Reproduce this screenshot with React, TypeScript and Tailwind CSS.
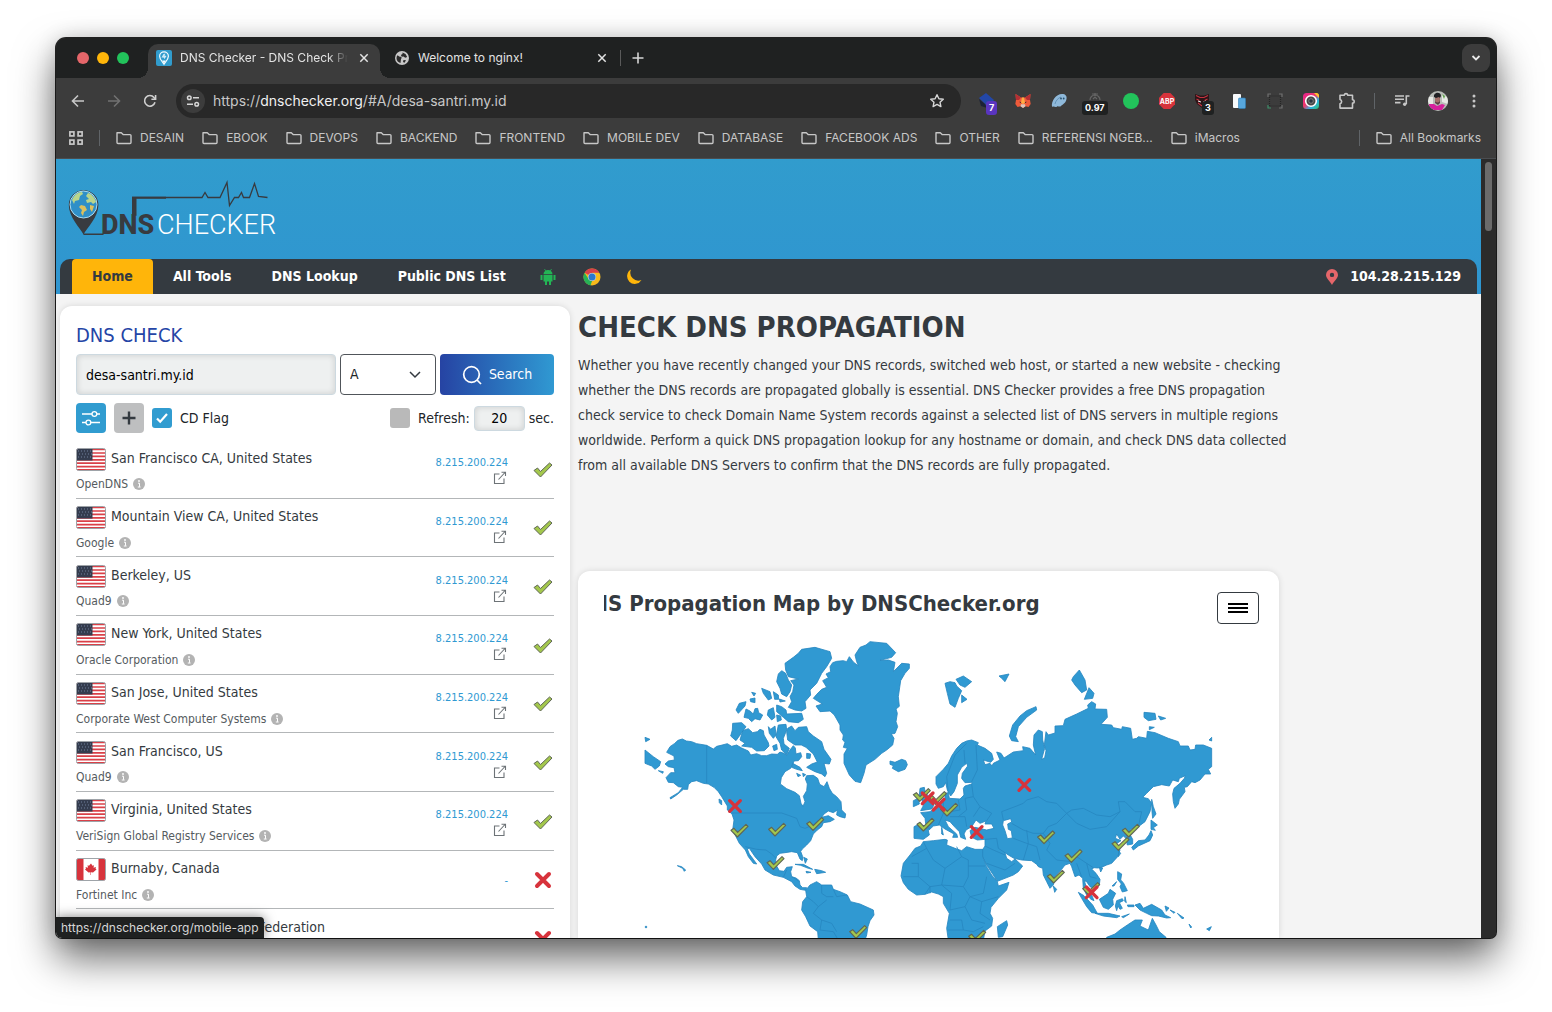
import React from "react";

const UI = "font-[Inter,'Liberation_Sans',sans-serif]";
const SITE = "font-['DejaVu_Sans_Condensed','Noto_Sans',sans-serif]";

/* ---------- browser chrome icons ---------- */

function FolderIcon() {
  return (
    <svg className="h-4 w-4 shrink-0" viewBox="0 0 16 16" fill="none" stroke="#c7c7c7" strokeWidth="1.4">
      <path d="M1 2.800h4.300l1.800 1.800h6.900a1 1 0 0 1 1 1v6.900a1 1 0 0 1-1 1H2a1 1 0 0 1-1-1z" strokeLinejoin="round" />
    </svg>
  );
}

function CloseIcon() {
  return (
    <svg className="h-4 w-4" viewBox="0 0 16 16" stroke="#e3e3e3" strokeWidth="1.5">
      <path d="M4.3 4.3l7.4 7.4M11.7 4.3l-7.4 7.4" />
    </svg>
  );
}

function SiteFavicon() {
  return (
    <svg className="h-4 w-4 shrink-0" viewBox="0 0 16 16">
      <rect width="16" height="16" rx="2" fill="#319ccd" />
      <path d="M8 14.3C6.600 12 3.600 9.500 3.600 6.300a4.400 4.400 0 0 1 8.800 0C12.400 9.500 9.400 12 8 14.300z" fill="#319ccd" stroke="#f4fbff" strokeWidth="1.200" />
      <path d="M5.500 7.500l2-3.500 2-.5-1 2 2 .5-2 3-1-1.500z" fill="#cfeaf7" />
      <path d="M6.300 10.500h3.400L8 13.800z" fill="#f4fbff" />
    </svg>
  );
}

function GlobeIcon() {
  return (
    <svg className="h-4 w-4 shrink-0" viewBox="0 0 16 16">
      <circle cx="8" cy="8" r="7" fill="#c7c7c7" />
      <path d="M3 5.500c1.500-.5 2 1.300 3.700 1.300 1.300 0 1 1.700.3 2.200L6.500 13C4 12.500 2.500 10.500 2.500 8zM8.500 2.500l3 1.500 1.700 3-2 .8-1.700-1.300-1.700.3-1-1.800 1.700-1zM9.500 10l2.500.3-1.500 2.400-1.500-.7z" fill="#2a2a2a" />
    </svg>
  );
}

function BackIcon() {
  return (
    <svg className="h-4 w-4" viewBox="0 0 16 16" fill="none" stroke="#c7c7c7" strokeWidth="1.600">
      <path d="M14 8H2.800M8 2.500L2.500 8 8 13.500" />
    </svg>
  );
}

function ForwardIcon() {
  return (
    <svg className="h-4 w-4" viewBox="0 0 16 16" fill="none" stroke="#717171" strokeWidth="1.600">
      <path d="M2 8h11.200M8 2.500L13.500 8 8 13.500" />
    </svg>
  );
}

function ReloadIcon() {
  return (
    <svg className="h-4 w-4" viewBox="0 0 16 16" fill="none" stroke="#d0d0d0" strokeWidth="1.600">
      <path d="M13 9.300A5.300 5.300 0 1 1 12 4.500L13.500 6" />
      <path d="M13.600 2v4.200H9.400" />
    </svg>
  );
}

function TuneIcon() {
  return (
    <svg className="h-4 w-4" viewBox="0 0 16 16" fill="none" stroke="#d6d6d6" strokeWidth="1.500">
      <circle cx="4.300" cy="4.800" r="1.800" />
      <path d="M8 4.800h6M2 11.200h6" />
      <circle cx="11.700" cy="11.200" r="1.800" />
    </svg>
  );
}

function StarIcon() {
  return (
    <svg className="h-4 w-4" viewBox="0 0 16 16" fill="none" stroke="#d6d6d6" strokeWidth="1.400" strokeLinejoin="round">
      <path d="M8 1.700l1.900 4 4.400.5-3.300 3 .9 4.400L8 11.400l-3.900 2.200.9-4.400-3.300-3 4.400-.5z" />
    </svg>
  );
}

function AppsIcon() {
  return (
    <svg className="h-4 w-4" viewBox="0 0 16 16" fill="none" stroke="#c7c7c7" strokeWidth="1.700">
      <rect x="1.900" y="1.900" width="4" height="4" />
      <rect x="10.100" y="1.900" width="4" height="4" />
      <rect x="1.900" y="10.100" width="4" height="4" />
      <rect x="10.100" y="10.100" width="4" height="4" />
    </svg>
  );
}

/* ---------- extension icons ---------- */

function Badge({ text, tone }: { text: string; tone: string }) {
  return (
    <span className={`absolute top-[8px] rounded-[3px] px-[3px] text-[9px] leading-[14px] font-bold text-white ${tone}`}>
      {text}
    </span>
  );
}

const extensions: { name: string; icon: React.ReactNode; badge?: React.ReactNode }[] = [
  {
    name: "Tag assistant",
    icon: (
      <svg className="h-4 w-4" viewBox="0 0 16 16">
        <path d="M0 5L7 0l8 7-6 7z" fill="#2347a8" />
        <path d="M0 6l2 7 6 2-2-4z" fill="#1b2236" />
      </svg>
    ),
    badge: <Badge text="7" tone="left-[7px] bg-[#5a35c0]" />,
  },
  {
    name: "Wallet",
    icon: (
      <svg className="h-4 w-4" viewBox="0 0 16 16">
        <path d="M0.500 1l5.500 3.500h4L15.500 1l-.5 6 .7 4-2.200 3-3-.7L8 15l-2.500-1.700-3 .7L.3 11 1 7z" fill="#ee5a3a" />
        <path d="M.5 1L6 4.500 4 7 1 7zM15.500 1L10 4.500 12 7l3 0z" fill="#b52f34" />
        <path d="M5.500 13.300L8 15l2.500-1.700-.5-2H6z" fill="#d9c7bd" />
        <path d="M4.500 8.500l2 1-1.500.5zM11.500 8.500l-2 1 1.500.5z" fill="#2a2a2a" />
        <path d="M7 4.500h2l1 5-2 1.800-2-1.800z" fill="#ffad42" />
      </svg>
    ),
  },
  {
    name: "Ghost",
    icon: (
      <svg className="h-4 w-4" viewBox="0 0 16 16">
        <path d="M1 14C0 8 5 1 11 1c3.500 0 5 2 4.500 5-.5 4-3.500 5-5.500 7-1.500 1.500-3-.5-4 .5C4.500 15 3 12.500 1 14z" fill="#8fb9da" />
        <path d="M4 11c.5-3 3-6 6-7" stroke="#6593b8" strokeWidth="1" fill="none" />
        <circle cx="10" cy="5.500" r=".9" fill="#27516e" />
        <circle cx="12.700" cy="5.500" r=".9" fill="#27516e" />
      </svg>
    ),
  },
  {
    name: "Speed",
    icon: (
      <svg className="h-4 w-4" viewBox="0 0 16 16" fill="none" stroke="#656565" strokeWidth="1.200">
        <path d="M5 1h6M8 0v3M3 7a5 5 0 0 1 10 0M6 6l2-2 2 2" />
      </svg>
    ),
    badge: <Badge text="0.97" tone="-left-[5px] bg-[#1f2121]" />,
  },
  { name: "Recorder", icon: <span className="h-4 w-4 rounded-full bg-[#22c35b]" /> },
  {
    name: "Ad blocker",
    icon: (
      <svg className="h-4 w-4" viewBox="0 0 16 16">
        <path d="M4.700 0h6.600L16 4.700v6.600L11.300 16H4.700L0 11.300V4.700z" fill="#d7333c" />
        <text x="8" y="10.500" textAnchor="middle" fontSize="7" fontWeight="700" fontFamily="Inter" fill="#fff">ABP</text>
      </svg>
    ),
  },
  {
    name: "Shield",
    icon: (
      <svg className="h-4 w-4" viewBox="0 0 16 16">
        <path d="M0 1l5 1.500h4L14 1v6l-2 4-5 4-5-4-2-4z" fill="#2b1417" />
        <path d="M1 2.500l4 2h4l4-2M1.500 6l3 1.500M12.500 6l-3 1.500M3 10l4 3" stroke="#c23340" strokeWidth="1.200" fill="none" />
        <path d="M3 8l3 1M11 8L8 9" stroke="#eee" strokeWidth="1" />
      </svg>
    ),
    badge: <Badge text="3" tone="left-[7px] bg-[#1f2121]" />,
  },
  {
    name: "Devices",
    icon: (
      <svg className="h-4 w-4" viewBox="0 0 16 16">
        <rect x="2" y="1" width="8" height="14" rx="1" fill="#f8fafc" />
        <rect x="7.500" y="5" width="7" height="10.500" rx="1" fill="#57a7dd" stroke="#2f7fb8" strokeWidth=".6" />
      </svg>
    ),
  },
  {
    name: "Capture",
    icon: (
      <svg className="h-4 w-4" viewBox="0 0 16 16" fill="none" strokeWidth="1.200">
        <path d="M1 4V1h3M12 1h3v3M15 12v3h-3" stroke="#6f6f6f" />
        <path d="M4 15H1v-3" stroke="#3e8f6a" />
        <rect x="2.500" y="3" width="11" height="10" stroke="#252525" strokeDasharray="1 1" />
      </svg>
    ),
  },
  {
    name: "Camera",
    icon: (
      <svg className="h-4 w-4" viewBox="0 0 16 16">
        <defs>
          <linearGradient id="cam" x1="0" y1="0" x2="1" y2="1">
            <stop offset="0" stopColor="#e5218f" />
            <stop offset=".45" stopColor="#f0386b" />
            <stop offset=".7" stopColor="#2ab4e6" />
            <stop offset="1" stopColor="#35c269" />
          </linearGradient>
        </defs>
        <rect width="16" height="16" rx="3.500" fill="url(#cam)" />
        <path d="M11 0h2.500A2.500 2.500 0 0 1 16 2.500V5z" fill="#ffc02e" />
        <circle cx="8" cy="8" r="5.300" fill="#474747" stroke="#fff" strokeWidth="1.600" />
        <circle cx="8" cy="8" r="2.300" fill="#2a3540" stroke="#8a8a8a" strokeWidth=".8" />
      </svg>
    ),
  },
  {
    name: "Extensions",
    icon: (
      <svg className="h-[18px] w-[18px] shrink-0" viewBox="0 0 18 18" fill="none" stroke="#c7c7c7" strokeWidth="1.600" strokeLinejoin="round">
        <path d="M2 3.300h4.300a1.700 1.700 0 0 1 3.400 0H14.500v4.400a1.700 1.700 0 0 1 0 3.400v5H2v-4.300a2.300 2.300 0 0 0 0-4.400z" />
      </svg>
    ),
  },
];

const bookmarks = [
  "DESAIN",
  "EBOOK",
  "DEVOPS",
  "BACKEND",
  "FRONTEND",
  "MOBILE DEV",
  "DATABASE",
  "FACEBOOK ADS",
  "OTHER",
  "REFERENSI NGEB...",
  "iMacros",
];

function TabStrip() {
  return (
    <div className="flex h-10 items-end bg-[#1f2121] pr-1 text-[12px] text-[#e3e3e3]">
      <div className="flex h-10 items-center gap-2 pr-[19px] pl-[21px]">
        <span className="h-3 w-3 rounded-full bg-[#e5666a]" />
        <span className="h-3 w-3 rounded-full bg-[#ffb60a]" />
        <span className="h-3 w-3 rounded-full bg-[#22c35b]" />
      </div>
      <div className="relative flex h-[34px] w-[232px] items-center gap-2 rounded-t-[10px] bg-[#3c3c3c] pr-2 pb-[6px] pl-2">
        <span className="absolute bottom-0 -left-[10px] h-[10px] w-[10px] bg-[radial-gradient(circle_at_0_0,#1f2121_10px,#3c3c3c_10px)]" />
        <span className="absolute -right-[10px] bottom-0 h-[10px] w-[10px] bg-[radial-gradient(circle_at_100%_0,#1f2121_10px,#3c3c3c_10px)]" />
        <SiteFavicon />
        <span className="min-w-0 flex-1 overflow-hidden whitespace-nowrap [mask-image:linear-gradient(to_right,black_148px,transparent_168px)]">
          DNS Checker - DNS Check Propagation
        </span>
        <button aria-label="Close tab"><CloseIcon /></button>
      </div>
      <div className="flex h-[34px] w-[240px] items-center gap-2 pr-[10px] pb-[6px] pl-[14px]">
        <GlobeIcon />
        <span className="flex-1">Welcome to nginx!</span>
        <button aria-label="Close tab"><CloseIcon /></button>
      </div>
      <div className="flex h-[34px] items-center gap-[9px] pb-[6px]">
        <span className="h-4 w-px bg-[#5a5a5a]" />
        <button aria-label="New tab">
          <svg className="h-4 w-4" viewBox="0 0 16 16" stroke="#d6d6d6" strokeWidth="1.600"><path d="M8 2.500v11M2.500 8h11" /></svg>
        </button>
      </div>
      <button aria-label="Search tabs" className="mr-[2px] mb-[6px] ml-auto flex h-7 w-7 items-center justify-center rounded-[9px] bg-[#3c3c3c]">
        <svg className="h-3 w-3" viewBox="0 0 12 12" fill="none" stroke="#e8e8e8" strokeWidth="1.800"><path d="M2.500 4l3.500 3.500L9.500 4" /></svg>
      </button>
    </div>
  );
}

function Toolbar() {
  return (
    <div className="flex h-[46px] items-center bg-[#3c3c3c] pr-[14px] pl-[14px]">
      <div className="flex gap-5 pr-[18px]">
        <button aria-label="Back"><BackIcon /></button>
        <button aria-label="Forward"><ForwardIcon /></button>
        <button aria-label="Reload"><ReloadIcon /></button>
      </div>
      <div className="flex h-[34px] min-w-0 flex-1 items-center gap-2 rounded-full bg-[#282828] pr-4 pl-[5px]">
        <button aria-label="Site information" className="flex h-6 w-6 items-center justify-center rounded-full bg-[#3c3c3c]"><TuneIcon /></button>
        <span className="min-w-0 flex-1 text-[14px] leading-[18px] text-[#c7c7c7]">
          https://<span className="text-[#f0f0f0]">dnschecker.org</span>/#A/desa-santri.my.id
        </span>
        <button aria-label="Bookmark this page"><StarIcon /></button>
      </div>
      <div className="flex items-center gap-5 pl-[18px]">
        {extensions.map((e) => (
          <button key={e.name} aria-label={e.name} className="relative flex h-4 w-4 items-center justify-center">
            {e.icon}
            {e.badge}
          </button>
        ))}
      </div>
      <span className="mx-[19px] h-4 w-px bg-[#606468]" />
      <div className="flex items-center gap-[18px]">
        <button aria-label="Media controls">
          <svg className="h-4 w-4" viewBox="0 0 16 16" fill="none" stroke="#c7c7c7" strokeWidth="1.600">
            <path d="M1 3h9M1 6.300h9M1 9.600h5.500M12.300 11V3H15.500" />
            <circle cx="10.700" cy="11.300" r="1.700" fill="#c7c7c7" stroke="none" />
          </svg>
        </button>
        <button aria-label="Profile">
          <svg className="h-5 w-5 rounded-full" viewBox="0 0 20 20">
            <rect width="20" height="20" fill="#b9bcb8" />
            <path d="M0 6h5v9H0zM14 3l6 4v6l-6-2z" fill="#e7e9e5" />
            <path d="M14 3l3 2-1 3z" fill="#5ea04c" />
            <path d="M1 13l5 0 3 2 5-2 3 1-3 5H6l-5-2z" fill="#d5219c" />
            <path d="M8 3h4v9l-2 2-3-2z" fill="#5a4044" />
            <ellipse cx="9.500" cy="8" rx="2.500" ry="3.500" fill="#a4716a" />
            <path d="M6 6c-1-5 7-6 7-1l-1 2-1-1-3 1z" fill="#202024" />
          </svg>
        </button>
        <button aria-label="Menu" className="flex w-4 justify-center">
          <svg className="h-4 w-4" viewBox="0 0 16 16" fill="#c7c7c7"><circle cx="8" cy="3" r="1.500" /><circle cx="8" cy="8" r="1.500" /><circle cx="8" cy="13" r="1.500" /></svg>
        </button>
      </div>
    </div>
  );
}

function BookmarksBar() {
  return (
    <div className="flex h-[35px] items-center overflow-hidden border-b border-[#4a4d50] bg-[#3c3c3c] pr-[15px] pb-[7px] pl-3 text-[12px] whitespace-nowrap text-[#c7c7c7]">
      <button aria-label="Apps"><AppsIcon /></button>
      <span className="mr-4 ml-[15px] h-4 w-px bg-[#606468]" />
      <div className="flex gap-[18px]">
        {bookmarks.map((b) => (
          <button key={b} className="flex items-center gap-2"><FolderIcon />{b}</button>
        ))}
      </div>
      <span className="mr-4 ml-auto h-4 w-px bg-[#606468]" />
      <button className="flex items-center gap-2"><FolderIcon />All Bookmarks</button>
    </div>
  );
}

/* ---------- site header ---------- */

function Logo() {
  return (
    <a href="#home" aria-label="DNSChecker" className="block w-[212px]">
      <svg className="h-[56px] w-[212px] overflow-visible" viewBox="0 0 212 56">
        <path d="M15.500 53.500C12 47 0.800 36 0.800 24a14.800 14.800 0 0 1 29.600 0C30.400 36 19 47 15.500 53.500z" fill="#383b40" />
        <path d="M15.500 53.300h20" stroke="#383b40" strokeWidth="1.500" />
        <circle cx="15.500" cy="23.500" r="13.500" fill="#2f8fc8" stroke="#a9dcf4" strokeWidth="1" />
        <path d="M4 19c2-5 6-8 10-8l1 2-3 2-1 4-4 1-1 3zM20 12c4 1 7 5 8 9l-3 2-2-2-4 1-1-3 3-1-3-3z" fill="#b9d58c" />
        <path d="M13 24l4 1 2 4-3 2-1 4-2-3 1-3-3-3zM22 24l4 1-2 6-2-3z" fill="#dcc05e" />
        <path d="M64 16.500h70l3-5 3 5h12l7-15 2.500 23 5-8h4l3-5 2 5h6l5-14 4 13 9 1" fill="none" stroke="#383b40" strokeWidth="1.300" />
        <path d="M64 15.800h34v2H68.500v17H64z" fill="#383b40" />
        <text x="33" y="53" fontSize="27" fontWeight="800" fill="#383b40" className="font-['Roboto',sans-serif]">DNS</text>
        <text x="89" y="53" fontSize="27" fontWeight="300" fill="#fff" className="font-['Roboto',sans-serif]">CHECKER</text>
      </svg>
    </a>
  );
}

function SiteHeader() {
  return (
    <header className="bg-linear-to-b from-[#319ccd] to-[#2f95d0] px-1">
      <div className="flex h-[100px] items-start pt-[22px] pl-2"><Logo /></div>
      <nav className="flex h-[35px] items-center rounded-t-[10px] bg-[#343a40] pr-4 pl-3 text-[14px] font-bold text-white">
        <a href="#home" className="flex h-full items-center rounded-t-[4px] bg-[#ffb50a] px-5 text-[#343a40]">Home</a>
        <a href="#tools" className="px-5">All Tools</a>
        <a href="#lookup" className="px-5">DNS Lookup</a>
        <a href="#list" className="px-5">Public DNS List</a>
        <a href="#mobile-app" aria-label="Android app" className="ml-[13px]">
          <svg className="h-[18px] w-[18px]" viewBox="0 0 18 18" fill="#23b455">
            <path d="M4.500 6.300a4.500 4.200 0 0 1 9 0zM4.500 7h9v6.500h-9zM1.500 7h2v5h-2zM14.500 7h2v5h-2zM6 13h2v4H6zM10 13h2v4h-2z" />
            <path d="M5.500 1l1.500 2.500M12.500 1L11 3.500" stroke="#23b455" strokeWidth=".8" />
          </svg>
        </a>
        <a href="#chrome" aria-label="Chrome extension" className="ml-[26px]">
          <svg className="h-[18px] w-[18px]" viewBox="0 0 18 18">
            <circle cx="9" cy="9" r="8.500" fill="#f8ba1c" />
            <path d="M9 9L1.600 4.700A8.500 8.500 0 0 1 16.400 4.700H9z" fill="#d9404a" />
            <path d="M1.600 4.700L5.800 11.500 9 13l-1.500 4.400A8.500 8.500 0 0 1 1.600 4.700z" fill="#27b257" />
            <circle cx="9" cy="9" r="4" fill="#c9d9e6" />
            <circle cx="9" cy="9" r="3.500" fill="#2b78cf" />
          </svg>
        </a>
        <button aria-label="Dark mode" className="ml-[24px]">
          <svg className="h-[18px] w-[18px]" viewBox="0 0 18 18"><path d="M6 1.500A7.700 7.700 0 1 0 16.500 12 8 8 0 0 1 6 1.500z" fill="#ffb60a" /></svg>
        </button>
        <span className="ml-auto flex items-center gap-3">
          <svg className="h-4 w-3" viewBox="0 0 12 16"><path fillRule="evenodd" d="M6 16C4.500 12.500 0 9.500 0 6a6 6 0 0 1 12 0c0 3.500-4.500 6.500-6 10zM6 3.700a2.200 2.200 0 1 0 0 4.400 2.200 2.200 0 0 0 0-4.400z" fill="#e5666a" /></svg>
          104.28.215.129
        </span>
      </nav>
    </header>
  );
}

/* ---------- DNS check panel ---------- */

type Server = { place: string; provider: string; flag: "us" | "ca" | "ru"; ip?: string };

const IP = "8.215.200.224";
const servers: Server[] = [
  { place: "San Francisco CA, United States", provider: "OpenDNS", flag: "us", ip: IP },
  { place: "Mountain View CA, United States", provider: "Google", flag: "us", ip: IP },
  { place: "Berkeley, US", provider: "Quad9", flag: "us", ip: IP },
  { place: "New York, United States", provider: "Oracle Corporation", flag: "us", ip: IP },
  { place: "San Jose, United States", provider: "Corporate West Computer Systems", flag: "us", ip: IP },
  { place: "San Francisco, US", provider: "Quad9", flag: "us", ip: IP },
  { place: "Virginia, United States", provider: "VeriSign Global Registry Services", flag: "us", ip: IP },
  { place: "Burnaby, Canada", provider: "Fortinet Inc", flag: "ca" },
  { place: "Yekaterinburg, Russian Federation", provider: "Skydns", flag: "ru" },
];

function Flag({ kind }: { kind: Server["flag"] }) {
  return (
    <svg className="h-[23px] w-[30px] shrink-0" viewBox="0 0 30 23">
      <clipPath id="flagClip"><rect x=".5" y=".5" width="29" height="22" rx="2" /></clipPath>
      <g clipPath="url(#flagClip)">
        <rect width="30" height="23" fill="#fff" />
        {kind === "us" && (
          <>
            <path d="M0 1.500h30M0 5h30M0 8.400h30M0 11.800h30M0 15.200h30M0 18.600h30M0 21.800h30" stroke="#da4048" strokeWidth="1.700" />
            <rect width="16.500" height="12.500" fill="#343c4e" />
            <path d="M2 3h14M3 6h13M2 9h14" stroke="#70809c" strokeWidth="1" strokeDasharray="1 2" />
          </>
        )}
        {kind === "ca" && (
          <>
            <path d="M0 0h7.500v23H0zM22.500 0H30v23h-7.500z" fill="#d7333c" />
            <path d="M15 5.500l1.500 2.300 1.500-.5-.5 2.500 2.500-.8-.5 1.500 1 1-3.500 3-2-.3V17h-.5v-2.800l-2 .3-3.500-3 1-1-.5-1.500 2.500.8-.5-2.500 1.500.5z" fill="#d7333c" />
          </>
        )}
        {kind === "ru" && <path d="M0 8h30v15H0z" fill="#d7333c" />}
      </g>
      <rect x=".5" y=".5" width="29" height="22" rx="2" fill="none" stroke="#9ea3a8" />
    </svg>
  );
}

const CHECK = "M2 10.500L5.500 8 8.500 11.500 17.500 3 20 5 8.500 17z";

function StatusIcon({ ok }: { ok: boolean }) {
  return ok ? (
    <svg className="h-5 w-[22px]" viewBox="0 0 22 20" role="img" aria-label="Resolved">
      <path d={CHECK} fill="#a3c74c" stroke="#5f6656" strokeWidth="1" strokeLinejoin="round" />
    </svg>
  ) : (
    <svg className="h-5 w-[22px]" viewBox="0 0 22 20" role="img" aria-label="Not resolved">
      <path d="M5 4l12 12M17 4L5 16" stroke="#d7333c" strokeWidth="4" strokeLinecap="round" />
    </svg>
  );
}

function InfoIcon() {
  return (
    <svg className="h-3 w-3" viewBox="0 0 12 12">
      <circle cx="6" cy="6" r="6" fill="#b3b3b3" />
      <path d="M5 5.200h1.500v3.600M4.800 9h2.800" stroke="#fff" strokeWidth="1" fill="none" />
      <circle cx="6" cy="3" r=".9" fill="#fff" />
    </svg>
  );
}

function ExternalIcon() {
  return (
    <svg className="h-[14px] w-[14px]" viewBox="0 0 14 14" fill="none" stroke="#6d7377" strokeWidth="1.100">
      <path d="M6.500 3H1.500v9.500h9.500V7.500M5.500 8.500l6.500-7M8.500 1.200h4V5" />
    </svg>
  );
}

function DnsCheckPanel() {
  return (
    <section className="w-[510px] shrink-0 rounded-t-xl bg-white px-4 pt-4 text-[14px] text-[#212529] shadow-[0_0_6px_rgba(0,0,0,0.12)]">
      <h2 className="mb-[6px] text-[20px] leading-[26px] text-[#2545a6]">DNS CHECK</h2>
      <div className="flex gap-1">
        <input aria-label="Domain" defaultValue="desa-santri.my.id" className="h-[41px] min-w-0 flex-1 rounded-[4px] border border-[#cdd9e0] bg-[#eef0f0] px-[9px] text-black shadow-[inset_0_0_6px_rgba(0,0,0,0.15)]" />
        <div className="relative w-24">
          <select aria-label="Record type" defaultValue="A" className="h-[41px] w-full appearance-none rounded-[4px] border border-[#50555a] bg-white px-[9px]">
            <option>A</option>
            <option>AAAA</option>
          </select>
          <svg className="pointer-events-none absolute top-[14px] right-[15px] h-3 w-3" viewBox="0 0 12 12" fill="none" stroke="#343a40" strokeWidth="1.500"><path d="M1 4l5 5 5-5" /></svg>
        </div>
        <button className="flex h-[41px] w-[114px] items-center justify-center gap-[7px] rounded-[4px] bg-linear-to-r from-[#2643a3] to-[#3099d2] text-white">
          <svg className="h-5 w-5" viewBox="0 0 20 20" fill="none" stroke="#fff" strokeWidth="1.700"><circle cx="9.500" cy="9.500" r="7.800" /><path d="M15 15l4 4" /></svg>
          Search
        </button>
      </div>
      <div className="mt-2 mb-[7px] flex h-[30px] items-center">
        <button aria-label="Settings" className="flex h-[30px] w-[30px] items-center justify-center rounded-[4px] bg-[#319cd0]">
          <svg className="h-[18px] w-[18px]" viewBox="0 0 18 18" fill="none" stroke="#fff" strokeWidth="1.300"><path d="M0 5h10M15 5h3M0 13.500h4M9 13.500h9" /><circle cx="12.400" cy="5" r="2.400" /><circle cx="6.400" cy="13.500" r="2.400" /></svg>
        </button>
        <button aria-label="Add server" className="ml-2 flex h-[30px] w-[30px] items-center justify-center rounded-[4px] bg-[#bebfc0]">
          <svg className="h-[14px] w-[14px]" viewBox="0 0 14 14" stroke="#343a40" strokeWidth="2.400"><path d="M7 .5v13M.5 7h13" /></svg>
        </button>
        <label className="ml-2 flex items-center gap-2">
          <span className="relative flex">
            <input type="checkbox" defaultChecked className="h-5 w-5 appearance-none rounded-[3px] bg-[#319cd0]" />
            <svg className="pointer-events-none absolute inset-1 h-3 w-3" viewBox="0 0 12 12" fill="none" stroke="#fff" strokeWidth="2.200"><path d="M1 6.500l3.200 3.200L11 2" /></svg>
          </span>
          CD Flag
        </label>
        <label className="ml-auto flex items-center gap-2">
          <input type="checkbox" className="h-5 w-5 appearance-none rounded-[3px] bg-[#b9b9b9]" />
          Refresh:
        </label>
        <input aria-label="Refresh seconds" defaultValue="20" className="mx-1 h-[25px] w-[51px] rounded-[4px] border border-[#cdd9e0] bg-[#eef0f0] text-center text-black shadow-[inset_0_0_6px_rgba(0,0,0,0.15)]" />
        sec.
      </div>
      <table className="h-[528px] w-full border-collapse">
        <tbody>
          {servers.map((s, i) => (
            <tr key={i} className="border-b border-[#b3b6b8]">
              <td className="p-0 pt-[6px] align-top">
                <div className="flex h-[26px] items-center gap-[5px] text-[#343a40]">
                  <Flag kind={s.flag} />
                  <span className="pb-[2px]">{s.place}</span>
                </div>
                <div className="mt-1 flex h-4 items-center gap-[5px] text-[12px] text-[#555b60]">
                  {s.provider}
                  <InfoIcon />
                </div>
              </td>
              <td className="w-[90px] p-0 pt-[3px] pr-[14px] text-right text-[11px] leading-[15px] text-[#3099d2]">
                {s.ip ? (
                  <>
                    <div>{s.ip}</div>
                    <a href="#map" aria-label="Open details" className="flex justify-end pt-px pr-px"><ExternalIcon /></a>
                  </>
                ) : "-"}
              </td>
              <td className="w-8 p-0"><span className="flex justify-end pt-[2px]"><StatusIcon ok={!!s.ip} /></span></td>
            </tr>
          ))}
        </tbody>
      </table>
    </section>
  );
}

/* ---------- world map ---------- */

const WEST = [
  "M80 367L90 350 103 341 114 331 127 327 139 333 155 335 170 341 200 346 220 357 230 349 243 346 262 341 275 349 290 345 305 354 325 363 332 375 350 371 365 377 380 377 395 372 412 373 420 366 432 370 440 376 450 360 460 347 466 354 468 372 482 368 485 380 475 392 462 393 458 403 452 415 435 425 424 443 421 462 440 476 465 487 478 497 483 520 489 529 495 515 490 499 500 482 502 462 496 447 500 437 520 436 533 445 539 463 552 470 561 455 568 475 577 490 590 500 603 515 605 540 617 552 615 564 600 560 590 555 592 540 580 548 565 543 552 552 545 562 565 557 583 568 570 575 550 578 545 590 532 600 520 612 512 632 500 645 487 657 482 664 488 680 487 692 480 687 472 668 455 665 435 668 420 670 410 678 407 690 408 705 418 722 432 724 440 712 457 710 452 725 455 740 468 744 478 752 480 765 488 773 500 773 497 781 480 778 465 768 455 755 430 742 400 735 375 720 365 702 345 680 328 655 322 657 328 672 340 688 350 702 340 700 325 680 316 660 298 640 288 620 278 600 282 570 276 552 262 540 262 528 245 500 235 485 222 472 205 462 190 460 170 452 155 455 145 464 143 478 130 478 110 495 92 507 90 503 115 488 128 472 115 470 100 458 85 457 78 443 92 428 105 428 102 413 85 410 75 402 85 393 103 390 102 378Z",
  "M497 781L510 765 530 755 545 765 575 765 580 778 600 785 622 795 632 815 660 822 700 840 702 855 690 872 684 890 680 915 675 930 535 930 533 905 510 888 497 860 485 840 488 815 500 800Z",
  "M570 110L578 98 590 94 610 92 620 95 628 80 640 96 655 108 650 95 645 75 660 52 678 45 690 35 720 38 740 40 767 68 755 82 720 91 745 90 765 97 760 125 785 100 808 102 808 115 795 130 782 152 775 200 778 229 768 237 772 250 768 275 773 290 765 310 754 312 762 325 758 345 740 360 725 370 705 388 678 405 672 430 662 458 645 454 628 435 612 400 612 372 622 355 610 352 615 337 608 330 610 315 600 300 600 285 583 255 570 243 540 245 528 228 547 222 520 205 530 193 545 178 560 172 548 152 565 143 558 132 572 125Z",
  "M750 393L765 397 785 388 797 392 802 404 795 418 775 425 757 415 760 407 750 403Z",
  "M435 100L460 82 475 70 485 58 525 52 570 65 575 85 560 110 545 130 530 160 510 180 512 195 495 215 498 235 485 243 465 240 445 232 455 215 450 200 458 185 462 165 452 152 475 147 445 140 437 120Z",
  "M425 122L437 130 445 150 455 165 450 185 440 200 425 192 420 175 410 155 415 132Z",
  "M308 302L325 296 338 308 352 305 360 298 370 302 372 315 385 338 387 348 373 362 350 363 335 352 305 348 315 340 300 330Z",
  "M278 280L305 278 318 290 305 308 298 318 288 332 272 318 277 300Z",
  "M443 295L455 288 465 302 475 292 500 290 505 305 520 318 545 335 552 358 573 388 568 402 552 400 560 430 555 440 545 432 525 425 500 412 515 402 532 396 520 372 498 352 484 345 465 345 443 330 440 305Z",
  "M415 285L438 283 440 300 430 325 432 342 448 355 440 374 425 360 420 340 408 320Z",
  "M385 290L392 298 405 288 408 315 400 325 388 310Z M398 348L410 343 412 358 402 362Z",
  "M410 225L425 230 438 240 440 252 485 250 490 268 475 278 445 275 430 262 410 245Z",
  "M385 240L400 233 405 262 395 270 382 255Z M410 255L422 258 424 270 412 275Z",
  "M318 237L330 243 340 252 345 236 353 235 356 248 368 255 360 270 345 266 335 275 325 265 312 262Z",
  "M288 240L298 220 318 215 315 228 295 250Z M335 187L347 190 342 198Z M330 207L345 204 345 218 332 215Z M365 175L390 185 395 205 385 210 370 190Z M400 185L415 195 416 208 404 208Z M418 207L436 213 420 216Z",
  "M500 370L512 372 510 385 500 385Z M458 400L480 412 487 422 470 418 455 412Z M470 430L482 436 474 440Z M488 430L497 434 490 440Z",
  "M15 322L30 328 17 335Z M15 360L40 380 62 395 58 408 45 418 35 408 15 400Z M55 422L70 425 68 430Z",
  "M237 507L245 512 245 525 238 518Z M465 703L490 703 518 718 505 715 482 706Z M524 718L545 722 557 727 530 731Z M498 724L513 727 500 729Z M491 682L502 687 496 700Z M112 707L125 710 137 720 133 724 128 715Z M16 889h4v4h-4z",
];

const EAST = [
  "M138 440L160 418 175 400 185 378 200 355 215 340 230 333 245 330 265 338 262 345 285 355 305 370 310 388 302 397 280 390 285 404 300 400 306 408 310 400 330 390 320 366 333 370 342 384 370 366 400 362 398 350 420 355 437 375 430 345 432 315 445 300 457 305 458 330 464 355 455 388 464 383 468 362 463 345 468 305 475 315 495 309 495 288 520 287 525 268 560 252 595 235 593 225 605 215 617 222 615 237 650 238 652 262 633 283 665 285 670 293 695 298 697 290 722 295 727 328 740 325 745 320 770 325 772 304 795 308 835 325 865 335 870 348 895 348 900 360 915 358 917 345 940 345 965 355 965 410 955 418 962 432 945 432 930 450 915 458 905 455 892 470 883 472 885 485 868 508 865 522 855 535 850 515 848 492 852 475 870 460 883 445 886 437 868 445 865 455 848 450 838 468 815 464 790 470 770 490 758 502 775 506 785 520 780 545 765 575 745 590 722 598 718 610 728 628 728 642 712 645 708 625 700 618 690 628 680 612 676 625 693 632 678 642 690 660 683 680 665 700 650 705 632 713 622 714 612 713 605 717 618 730 630 748 628 765 612 775 600 770 590 755 583 752 590 775 605 795 612 812 603 808 590 795 580 775 578 745 567 735 555 740 545 710 540 700 525 705 515 718 495 740 490 765 480 775 470 755 460 735 458 715 445 710 440 703 425 692 395 690 372 685 355 675 345 668 350 685 365 695 375 687 398 708 385 725 370 735 322 754 312 738 290 705 275 675 277 660 285 648 285 628 262 630 245 622 240 602 255 592 290 600 312 595 305 582 285 582 288 573 270 580 258 570 245 590 228 600 222 612 227 628 212 622 208 605 195 592 180 575 165 570 175 590 200 612 203 622 188 622 192 612 165 597 148 585 130 588 115 602 118 615 100 628 72 625 72 590 80 586 108 588 105 565 92 548 120 545 140 530 155 515 165 510 165 490 175 488 178 505 210 507 222 495 220 475 225 468 245 462 247 457 225 458 215 445 217 430 233 408 230 400 215 412 202 435 202 460 192 485 182 498 172 480 167 458 160 470 145 475 138 462Z",
  "M100 635L130 632 165 628 172 630 170 645 195 655 215 662 230 650 255 658 278 658 278 680 290 710 305 735 322 755 325 768 357 757 350 780 325 805 303 832 300 850 308 865 305 888 285 903 280 930 175 930 170 895 178 850 160 820 160 800 145 792 125 786 105 793 80 795 55 778 40 758 33 738 40 700 60 675 75 655 92 648Z",
  "M322 890L350 872 353 885 338 920 325 922Z M90 475L103 472 105 485 125 512 132 525 125 537 92 542 100 527 95 505 88 495Z M70 512L85 505 88 522 70 530Z M155 592L160 615 155 612Z",
  "M165 160L180 155 195 158 200 168 215 182 205 205 195 232 180 222 172 190Z M198 148L220 138 245 155 225 172 210 165Z M215 195L231 208 215 218Z M327 138L357 132 345 155 335 145Z",
  "M550 140L568 120 585 150 590 180 575 188 555 165 545 150Z M597 173L612 190 608 205 583 208Z M762 247L795 250 798 268 775 272 762 262Z M805 258L827 265 812 270Z M778 290L793 292 778 299Z M957 330L965 322 965 333Z",
  "M438 230L440 240 410 262 385 290 377 320 385 335 365 332 358 318 368 285 390 258 410 242Z",
  "M785 508L790 530 798 552 788 565 786 545Z M783 570L802 585 790 593 796 601 783 598Z M783 602L788 615 780 632 745 648 730 660 725 652 745 632 765 630 777 615Z M686 663L692 670 685 680Z M490 768L500 778 494 787Z M628 712L638 714 632 726Z",
  "M683 725L695 732 692 750 700 758 712 782 697 786 690 770 694 762 683 748Z M666 768L680 755 672 768Z M628 808L655 790 660 778 677 790 668 808 670 825 655 838 640 832Z M565 787L582 797 608 825 622 850 605 848 590 830 575 805Z M615 850L655 850 690 858 680 863 640 858Z M695 860L718 852 700 863Z",
  "M680 812L697 806 700 812 688 818 697 835 690 838 684 828 680 842 676 828Z M705 800l4 18-5-4z M712 825h20v5h-18z M735 825L750 820 760 835 785 823 815 840 825 855 842 863 830 864 805 858 785 857 770 850 750 840Z M825 828l12 6-8 10z M840 840l15 7-3 3z M862 850l20 14-6 2z M897 882l8 9-3 3z M950 897l14-7-6 12z",
  "M650 922L675 912 690 900 712 885 735 870 757 870 750 888 775 900 787 865 798 885 808 905 828 922 828 930 650 930Z",
];

const WEST_BORDERS =
  "M200 346V460M276 549H425L445 556 470 565 480 590 495 595 520 585 535 570M316 650L350 658 378 660 395 672 408 685M430 742L440 720M545 765L545 790 560 800 580 800M500 800L520 815 535 830 520 850 545 870 540 900 580 905 595 930M580 778L590 800 620 795M535 830L560 810M545 870L575 880 590 905M455 740L475 752";
const EAST_BORDERS =
  "M175 488L170 440 195 375 230 340M222 360L225 400M258 345L262 420 245 455M245 462L250 500 225 505 230 540 205 560M250 500L270 530 305 550 290 572M160 515L160 550 145 585M85 588L120 595M205 510L210 540 180 545 160 550M180 560L225 560 230 590M340 570L335 545 375 530 400 520 410 510 445 500 470 515 500 520 530 550 545 540 580 535 620 555 660 560 690 545 685 515 705 515 735 545 755 545 745 590M530 550L560 580 600 598 650 590 690 545M530 550L500 580 475 590 460 610 480 640 470 660 500 690 545 695 560 680 590 700 610 713M365 580L400 600 430 610 460 610M370 625L410 640 440 650 450 690M410 600L415 640 400 690M285 628L320 625 325 655 345 668M285 648L310 660 345 675M290 700L345 720 375 700M560 700L575 740M590 700L600 740 620 745M270 530L250 560M100 635L110 655 65 680M110 655L130 690 165 715 215 680 200 650M165 715L155 765 120 770M65 700H85V740H40M85 740L120 770 105 793M215 680L235 690V740L220 770 155 765M235 708H285M220 770L240 800 280 790 290 740M240 800L225 830 180 840M240 800L275 815 325 800M275 815L270 850 300 870M225 830L245 870 285 880M180 870H215L220 900 175 900M220 900L250 905 280 890M155 765L185 790 180 840M120 790V770";

const okPins = [
  [298, 603], [411, 600], [525, 583], [406, 700], [654, 907],
  [845, 496], [893, 505], [927, 540], [856, 585], [1218, 623],
  [1300, 679], [1247, 741], [1441, 643], [1472, 603], [1353, 778], [1011, 921],
];
const badPins = [[285, 528], [863, 505], [896, 524], [1153, 465], [1010, 606], [1355, 787]];

function WorldMap() {
  return (
    <svg className="h-[308px] w-[580px] max-w-none" viewBox="0 0 1740 924" role="img" aria-label="World map of propagation results">
      <g fill="#3099d2" stroke="#2787c0" strokeWidth="2.500" strokeLinejoin="round">
        {WEST.map((d, i) => <path key={i} d={d} />)}
        <path d={WEST_BORDERS} fill="none" />
        <g transform="translate(750 0)">
          {EAST.map((d, i) => <path key={i} d={d} />)}
          <path d={EAST_BORDERS} fill="none" />
          <path d="M340 572L362 566 365 576 353 582 355 598 364 602 367 624 352 626 345 602 338 585Z" fill="#fff" />
        </g>
      </g>
      {okPins.map(([x, y], i) => (
        <path key={i} transform={`translate(${x} ${y})`} d="M-25 -2L-16 -8 -5 4 20 -20 26 -14 -6 18Z" fill="#a3c74c" stroke="#5f6656" strokeWidth="3.500" strokeLinejoin="round" />
      ))}
      {badPins.map(([x, y], i) => (
        <path key={i} transform={`translate(${x} ${y})`} d="M-16 -16L16 16M16 -16L-16 16" stroke="#d7333c" strokeWidth="10" strokeLinecap="round" />
      ))}
    </svg>
  );
}

function MainColumn() {
  return (
    <section className="flex w-[701px] shrink-0 flex-col text-[#343a40]">
      <h1 className="mt-[3px] text-[29px] leading-9 font-bold">CHECK DNS PROPAGATION</h1>
      <p className="mt-[8px] text-[14px] leading-[25px] whitespace-nowrap">
        Whether you have recently changed your DNS records, switched web host, or started a new website - checking<br />
        whether the DNS records are propagated globally is essential. DNS Checker provides a free DNS propagation<br />
        check service to check Domain Name System records against a selected list of DNS servers in multiple regions<br />
        worldwide. Perform a quick DNS propagation lookup for any hostname or domain, and check DNS data collected<br />
        from all available DNS Servers to confirm that the DNS records are fully propagated.
      </p>
      <div className="mt-[93px] rounded-t-xl bg-white shadow-[0_0_6px_rgba(0,0,0,0.12)]">
        <div className="flex items-start pt-[21px] pr-5 pl-[26px]">
          <h2 className="min-w-0 flex-1 overflow-hidden text-[22px] leading-6 font-bold whitespace-nowrap">
            <span className="-ml-[29px]">DNS Propagation Map by DNSChecker.org</span>
          </h2>
          <button aria-label="Map options" className="flex h-8 w-[42px] items-center justify-center rounded-[4px] border border-[#343a40]">
            <svg className="h-[10px] w-5" viewBox="0 0 20 10" stroke="#000" strokeWidth="2"><path d="M0 1h20M0 5h20M0 9h20" /></svg>
          </button>
        </div>
        <div className="mt-[6px] pl-[62px]"><WorldMap /></div>
      </div>
    </section>
  );
}

export default function App() {
  return (
    <div className={`flex h-screen w-full overflow-hidden bg-white px-14 pt-[38px] pb-[74px] ${UI}`}>
      <div className="flex min-w-0 flex-1 flex-col overflow-hidden rounded-t-[10px] rounded-b-[6px] bg-[#3c3c3c] shadow-[0_0_0_1px_rgba(0,0,0,0.85),0_20px_40px_rgba(0,0,0,0.6),0_0_20px_rgba(0,0,0,0.15)]">
        <TabStrip />
        <Toolbar />
        <BookmarksBar />
        <div className="relative flex min-h-0 flex-1">
          <div className={`min-w-0 flex-1 overflow-hidden bg-[#f4f4f4] ${SITE}`}>
            <SiteHeader />
            <main className="flex gap-2 px-1 pt-3">
              <DnsCheckPanel />
              <MainColumn />
            </main>
          </div>
          <div className="w-[15px] shrink-0 bg-[#2b2b2b] px-[4px] pt-[3px]">
            <div className="h-[69px] rounded-full bg-[#6b6b6b]" />
          </div>
          <div className="absolute bottom-0 left-0 rounded-tr-[4px] bg-[#1f2121] px-[5px] text-[12px] leading-[21px] text-[#d6d6d6] shadow-[0_0_12px_rgba(0,0,0,0.5)]">
            https://dnschecker.org/mobile-app
          </div>
        </div>
      </div>
    </div>
  );
}
